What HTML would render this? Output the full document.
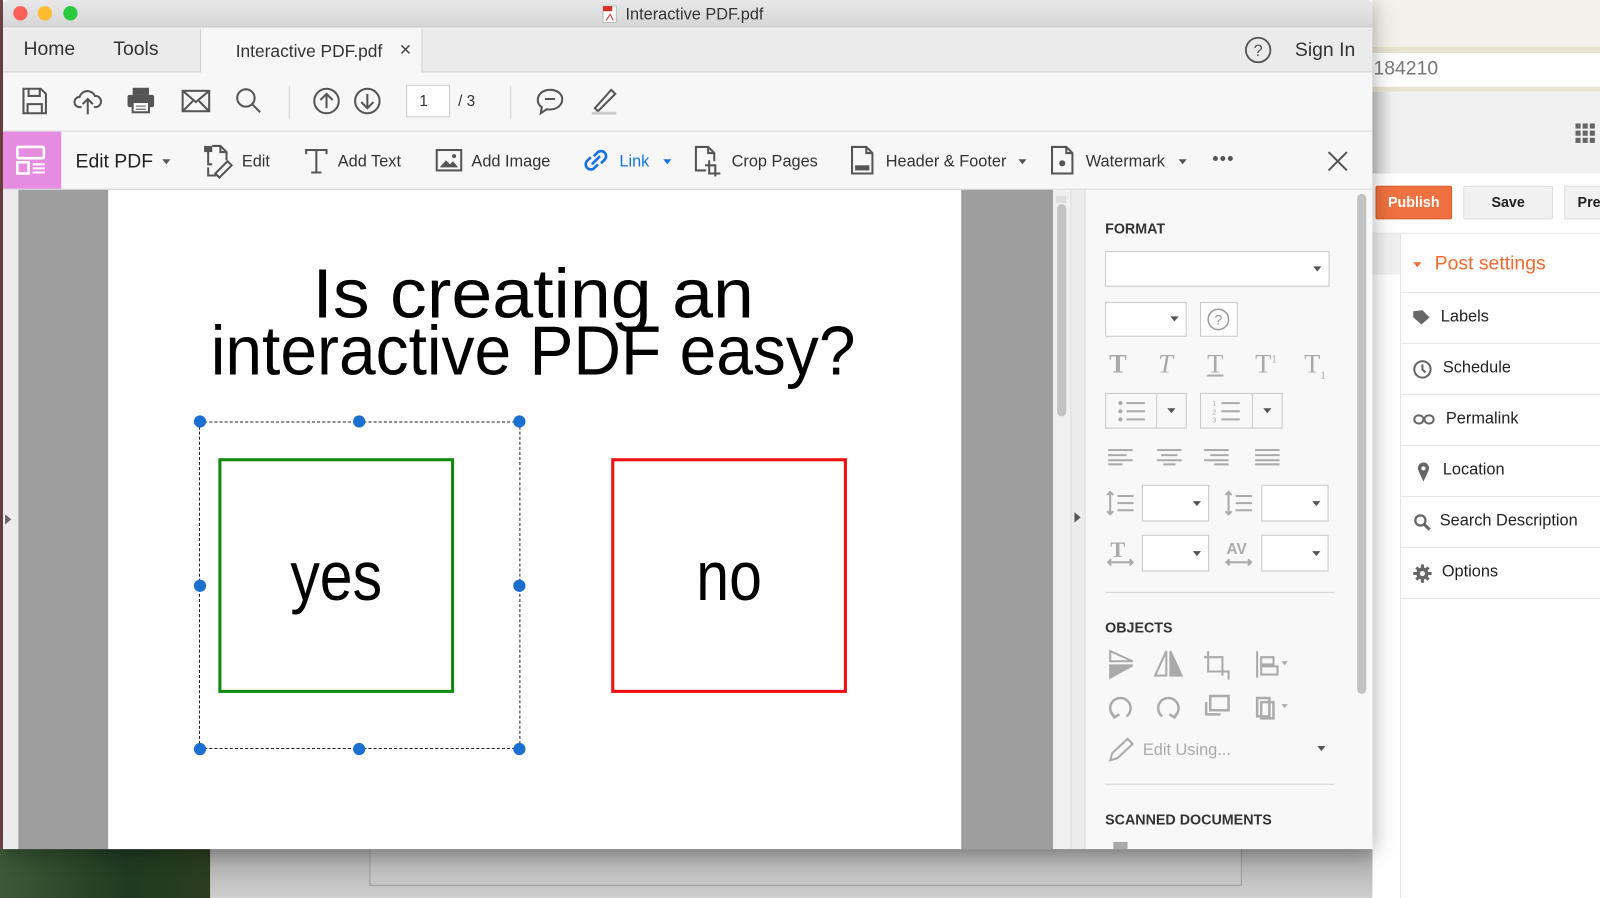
<!DOCTYPE html>
<html><head><meta charset="utf-8"><style>
*{box-sizing:border-box;margin:0;padding:0}
html,body{width:1600px;height:898px;overflow:hidden;background:#c8c8c8;font-family:"Liberation Sans",sans-serif}
#w{position:absolute;left:0;top:0;width:1568px;height:880px;transform:scale(1.0204,1.0205);transform-origin:0 0;overflow:hidden;background:#c6c6c6}
.a{position:absolute}
.t{position:absolute;white-space:nowrap;color:#333}
svg{position:absolute;overflow:visible}
.ic{stroke:#555;fill:none;stroke-width:2}
.sel{position:absolute;border:1px solid #c8c8c8;background:#fff}
.dd{position:absolute;width:0;height:0;border-left:4px solid transparent;border-right:4px solid transparent;border-top:5px solid #555}
</style></head><body><div id="w">
<!-- desktop bottom -->
<div class="a" style="left:0;top:820px;width:206px;height:60px;background:linear-gradient(90deg,#3c5a36,#1f3a22 60%,#2b3d1f)"></div>
<div class="a" style="left:206px;top:832px;width:1362px;height:48px;background:linear-gradient(#a8a8a8,#cfcfcf)"></div>
<div class="a" style="left:362px;top:832px;width:855px;height:36px;border:1px solid #999;border-top:none;background:linear-gradient(#b0b0b0,#c8c8c8)"></div>
<div class="a" style="left:0;top:0;width:3px;height:832px;background:#7a4a4a"></div>
<!-- browser right -->
<div class="a" style="left:1345px;top:0;width:223px;height:880px;background:#fff"></div>
<div class="a" style="left:1345px;top:0;width:223px;height:46px;background:#f4f1e8"></div>
<div class="a" style="left:1345px;top:46px;width:223px;height:6px;background:#e8e2d0"></div>
<div class="a" style="left:1345px;top:52px;width:223px;height:33px;background:#fff"></div>
<div class="t" style="left:1346px;top:57px;font-size:19px;color:#777">184210</div>
<div class="a" style="left:1345px;top:85px;width:223px;height:5px;background:#e8e2d0"></div>
<div class="a" style="left:1345px;top:90px;width:223px;height:80px;background:linear-gradient(90deg,#ccc,#f1f1f1 20px)"></div>
<svg style="left:1544px;top:121px" width="20" height="20"><g fill="#666"><rect x="0" y="0" width="5" height="5"/><rect x="7" y="0" width="5" height="5"/><rect x="14" y="0" width="5" height="5"/><rect x="0" y="7" width="5" height="5"/><rect x="7" y="7" width="5" height="5"/><rect x="14" y="7" width="5" height="5"/><rect x="0" y="14" width="5" height="5"/><rect x="7" y="14" width="5" height="5"/><rect x="14" y="14" width="5" height="5"/></g></svg>
<div class="a" style="left:1348px;top:182px;width:75px;height:33px;background:#f07140;border:1px solid #d95d2c;border-radius:2px;color:#fff;font-weight:bold;font-size:14px;text-align:center;line-height:31px">Publish</div>
<div class="a" style="left:1434px;top:182px;width:88px;height:33px;background:#f1f1f1;border:1px solid #ddd;border-radius:2px;color:#222;font-weight:bold;font-size:14px;text-align:center;line-height:31px">Save</div>
<div class="a" style="left:1533px;top:182px;width:40px;height:33px;background:#f1f1f1;border:1px solid #ddd;color:#222;font-weight:bold;font-size:14px;line-height:31px;padding-left:12px">Pre</div>
<div class="a" style="left:1345px;top:228px;width:223px;height:1px;background:#e5e5e5"></div>
<div class="a" style="left:1372px;top:229px;width:1px;height:651px;background:#e5e5e5"></div>
<div class="a" style="left:1345px;top:229px;width:27px;height:40px;background:#f1f1f1"></div>
<div class="dd" style="left:1385px;top:257px;border-top-color:#f26b2f"></div>
<div class="t" style="left:1406px;top:248px;font-size:19px;color:#f26b2f">Post settings</div>
<div class="a" style="left:1373px;top:286px;width:195px;height:1px;background:#e5e5e5"></div>
<div class="a" style="left:1373px;top:336px;width:195px;height:1px;background:#e5e5e5"></div>
<div class="a" style="left:1373px;top:386px;width:195px;height:1px;background:#e5e5e5"></div>
<div class="a" style="left:1373px;top:436px;width:195px;height:1px;background:#e5e5e5"></div>
<div class="a" style="left:1373px;top:486px;width:195px;height:1px;background:#e5e5e5"></div>
<div class="a" style="left:1373px;top:536px;width:195px;height:1px;background:#e5e5e5"></div>
<div class="a" style="left:1373px;top:586px;width:195px;height:1px;background:#e5e5e5"></div>
<svg style="left:1385px;top:303px" width="18" height="16"><path d="M0 2 L0 8 L8 15 L16 8 L9 1 Z" fill="#666"/></svg>
<div class="t" style="left:1412px;top:302px;font-size:16px;color:#222">Labels</div>
<svg style="left:1385px;top:353px" width="18" height="18"><circle cx="9" cy="9" r="8" stroke="#666" stroke-width="2" fill="none"/><path d="M9 4v5l3 3" stroke="#666" stroke-width="2" fill="none"/></svg>
<div class="t" style="left:1414px;top:352px;font-size:16px;color:#222">Schedule</div>
<svg style="left:1385px;top:406px" width="22" height="10"><rect x="1" y="1" width="9" height="8" rx="4" stroke="#666" stroke-width="2" fill="none"/><rect x="11" y="1" width="9" height="8" rx="4" stroke="#666" stroke-width="2" fill="none"/></svg>
<div class="t" style="left:1417px;top:402px;font-size:16px;color:#222">Permalink</div>
<svg style="left:1389px;top:453px" width="12" height="19"><path d="M6 19 L1 8 A5.5 5.5 0 1 1 11 8 Z" fill="#666"/><circle cx="6" cy="6" r="2" fill="#fff"/></svg>
<div class="t" style="left:1414px;top:452px;font-size:16px;color:#222">Location</div>
<svg style="left:1385px;top:503px" width="18" height="18"><circle cx="7" cy="7" r="5" stroke="#666" stroke-width="2.2" fill="none"/><path d="M11 11l5 5" stroke="#666" stroke-width="3"/></svg>
<div class="t" style="left:1411px;top:502px;font-size:16px;color:#222">Search Description</div>
<svg style="left:1385px;top:553px" width="18" height="18"><circle cx="9" cy="9" r="6" fill="#666"/><g stroke="#666" stroke-width="3"><path d="M9 0v18M0 9h18M3 3l12 12M15 3L3 15"/></g><circle cx="9" cy="9" r="2.5" fill="#fff"/></svg>
<div class="t" style="left:1413px;top:552px;font-size:16px;color:#222">Options</div>

<!-- window -->
<div class="a" style="left:3px;top:0;width:1342px;height:832px;background:#f7f7f7;box-shadow:0 4px 20px rgba(0,0,0,.35)"></div>
<div class="a" style="left:3px;top:0;width:1342px;height:27px;background:linear-gradient(#e8e8e8,#d6d6d6);border-bottom:1px solid #c2c2c2;border-radius:5px 5px 0 0"></div>
<div class="a" style="left:13px;top:6px;width:14px;height:14px;border-radius:50%;background:#fc5f57"></div>
<div class="a" style="left:37px;top:6px;width:14px;height:14px;border-radius:50%;background:#fdbc2e"></div>
<div class="a" style="left:62px;top:6px;width:14px;height:14px;border-radius:50%;background:#2ac840"></div>
<svg style="left:590px;top:5px" width="16" height="18"><rect x="1" y="1" width="13" height="16" fill="#fff" stroke="#bbb"/><rect x="1" y="1" width="9" height="5" fill="#d9302b"/><path d="M4 15 L8 9 L11 15" stroke="#d9302b" fill="none"/></svg>
<div class="t" style="left:613px;top:6px;font-size:16px;color:#333">Interactive PDF.pdf</div>
<div class="a" style="left:3px;top:28px;width:1342px;height:43px;background:#ebebeb;border-bottom:1px solid #d0d0d0"></div>
<div class="a" style="left:196px;top:28px;width:218px;height:43px;background:#f7f7f7;border-left:1px solid #d0d0d0;border-right:1px solid #d0d0d0"></div>
<div class="t" style="left:23px;top:38px;font-size:19px;color:#333">Home</div>
<div class="t" style="left:111px;top:38px;font-size:19px;color:#333">Tools</div>
<div class="t" style="left:231px;top:41px;font-size:17px;color:#333">Interactive PDF.pdf</div>
<div class="t" style="left:391px;top:40px;font-size:15px;color:#444">✕</div>
<svg style="left:1220px;top:36px" width="26" height="26"><circle cx="13" cy="13" r="12" stroke="#555" stroke-width="1.8" fill="none"/><text x="13" y="19" font-size="16" text-anchor="middle" fill="#555" font-family="Liberation Sans">?</text></svg>
<div class="t" style="left:1269px;top:39px;font-size:19px;color:#333">Sign In</div>
<div class="a" style="left:3px;top:128px;width:1342px;height:1px;background:#d8d8d8"></div>
<!-- toolbar icons -->
<svg style="left:22px;top:86px" width="24" height="26"><path d="M1 1h17l5 5v19H1z M6 1v7h11V1 M5 25v-9h14v9" class="ic" stroke="#aaa"/></svg>
<svg style="left:72px;top:85px" width="28" height="28"><path d="M8 20H6a5 5 0 0 1 0-10 8 8 0 0 1 15-1 5.5 5.5 0 0 1 1 11h-2 M14 27V12 M9 17l5-5 5 5" class="ic"/></svg>
<svg style="left:124px;top:85px" width="28" height="26"><rect x="6" y="1" width="16" height="7" fill="#555"/><rect x="1" y="8" width="26" height="12" rx="2" fill="#555"/><rect x="6" y="15" width="16" height="10" fill="#fff" stroke="#555" stroke-width="2"/><path d="M9 19h10M9 22h10" stroke="#555"/></svg>
<svg style="left:178px;top:88px" width="28" height="22"><rect x="1" y="1" width="26" height="20" class="ic"/><path d="M1 1l13 11L27 1M1 21l10-10M27 21L17 11" class="ic"/></svg>
<svg style="left:231px;top:86px" width="26" height="26"><circle cx="10" cy="10" r="8.5" class="ic"/><path d="M16 16l8 8" class="ic" stroke-width="2.5"/></svg>
<div class="a" style="left:283px;top:84px;width:1px;height:32px;background:#d0d0d0"></div>
<svg style="left:307px;top:86px" width="26" height="26"><circle cx="13" cy="13" r="12" class="ic" stroke="#aaa"/><path d="M13 20V6M7 12l6-6 6 6" class="ic" stroke="#aaa"/></svg>
<svg style="left:347px;top:86px" width="26" height="26"><circle cx="13" cy="13" r="12" class="ic"/><path d="M13 6v14M7 14l6 6 6-6" class="ic"/></svg>
<div class="a" style="left:398px;top:83px;width:43px;height:32px;background:#fff;border:1px solid #ccc"></div>
<div class="t" style="left:411px;top:91px;font-size:15px">1</div>
<div class="t" style="left:449px;top:91px;font-size:15px">/ 3</div>
<div class="a" style="left:500px;top:84px;width:1px;height:32px;background:#d0d0d0"></div>
<svg style="left:525px;top:86px" width="28" height="28"><path d="M14 2C7 2 2 6.5 2 12c0 3 1.5 5.5 4 7l-1 6 6-4c1 .2 2 .3 3 .3 7 0 12-4.5 12-10S21 2 14 2z" class="ic"/><path d="M9 11h10" class="ic"/></svg>
<svg style="left:577px;top:84px" width="30" height="30"><path d="M6 22L22 4l4 4L9 25z M4 27h22" class="ic"/><path d="M3 27h24" stroke="#ccc" stroke-width="3"/></svg>
<!-- edit toolbar -->
<div class="a" style="left:3px;top:129px;width:57px;height:56px;background:#e68ce0"></div>
<svg style="left:16px;top:143px" width="30" height="30"><rect x="1" y="1" width="26" height="11" rx="1" stroke="#fff" stroke-width="2.5" fill="none"/><rect x="1" y="16" width="11" height="11" stroke="#fff" stroke-width="2.5" fill="none"/><path d="M16 18h12M16 22h12M16 26h12" stroke="#fff" stroke-width="2"/></svg>
<div class="t" style="left:74px;top:148px;font-size:19px;color:#222">Edit PDF</div>
<div class="dd" style="left:159px;top:156px"></div>
<svg style="left:199px;top:142px" width="30" height="32"><path d="M1 1h8v6H1z" fill="#555"/><path d="M5 7v12h4 M9 1h8l6 6v8 M17 1v6h6 M5 22v8h8" class="ic"/><path d="M12 28l12-12 4 4-12 12z" class="ic"/></svg>
<div class="t" style="left:237px;top:150px;font-size:16px;color:#333">Edit</div>
<svg style="left:299px;top:146px" width="22" height="24"><path d="M1 5V1h20v4M11 1v22M6 23h10" class="ic"/></svg>
<div class="t" style="left:331px;top:150px;font-size:16px;color:#333">Add Text</div>
<svg style="left:427px;top:146px" width="26" height="22"><rect x="1" y="1" width="24" height="20" class="ic"/><path d="M4 18l6-7 4 4 3-3 5 6z" fill="#555"/><circle cx="18" cy="7" r="2" fill="#555"/></svg>
<div class="t" style="left:462px;top:150px;font-size:16px;color:#333">Add Image</div>
<svg style="left:570px;top:143px" width="28" height="28"><path d="M12 10l4-4a5 5 0 0 1 7 7l-4 4M16 18l-4 4a5 5 0 0 1-7-7l4-4M10 18l8-8" stroke="#1473e6" stroke-width="2.6" fill="none"/></svg>
<div class="t" style="left:607px;top:150px;font-size:16px;color:#1473e6">Link</div>
<div class="dd" style="left:650px;top:156px;border-top-color:#1473e6"></div>
<svg style="left:681px;top:143px" width="26" height="30"><path d="M11 24H1V1h12l6 6v8 M13 1v6h6 M14 14v13h11 M10 19h10v11" class="ic"/></svg>
<div class="t" style="left:717px;top:150px;font-size:16px;color:#333">Crop Pages</div>
<svg style="left:834px;top:143px" width="22" height="28"><path d="M1 1h14l6 6v20H1z M15 1v6h6" class="ic"/><rect x="4" y="19" width="14" height="5" fill="#555"/></svg>
<div class="t" style="left:868px;top:150px;font-size:16px;color:#333">Header &amp; Footer</div>
<div class="dd" style="left:998px;top:156px"></div>
<svg style="left:1030px;top:143px" width="22" height="28"><path d="M1 1h14l6 6v20H1z M15 1v6h6" class="ic"/><circle cx="11" cy="17" r="3" fill="#555"/></svg>
<div class="t" style="left:1064px;top:150px;font-size:16px;color:#333">Watermark</div>
<div class="dd" style="left:1155px;top:156px"></div>
<div class="t" style="left:1188px;top:145px;font-size:18px;color:#555;letter-spacing:1px">•••</div>
<svg style="left:1301px;top:148px" width="20" height="20"><path d="M1 1l18 18M19 1L1 19" stroke="#555" stroke-width="2"/></svg>
<div class="a" style="left:3px;top:185px;width:1342px;height:1px;background:#d8d8d8"></div>
<!-- content -->
<div class="a" style="left:3px;top:186px;width:15px;height:646px;background:#ececec"></div>
<div class="dd" style="left:5px;top:504px;border-top:5px solid transparent;border-bottom:5px solid transparent;border-left:6px solid #666;border-right:none"></div>
<div class="a" style="left:18px;top:186px;width:1014px;height:646px;background:#9e9e9e"></div>
<div class="a" style="left:106px;top:186px;width:836px;height:646px;background:#fff"></div>
<div class="a" style="left:1032px;top:186px;width:17px;height:646px;background:#f0f0f0"></div>
<div class="a" style="left:1035px;top:192px;width:10px;height:7px;background:#ddd"></div>
<div class="a" style="left:1036px;top:200px;width:9px;height:208px;border-radius:5px;background:#c2c2c2"></div>
<div class="a" style="left:1049px;top:186px;width:15px;height:646px;background:#ececec;border-left:1px solid #ddd;border-right:1px solid #ddd"></div>
<div class="dd" style="left:1053px;top:502px;border-top:5px solid transparent;border-bottom:5px solid transparent;border-left:6px solid #555;border-right:none"></div>
<!-- pdf page -->
<div class="t" style="left:0;width:1045px;text-align:center;top:249px;font-size:68px;color:#000;transform:scaleX(1.06);transform-origin:522px 0">Is creating an</div>
<div class="t" style="left:0;width:1045px;text-align:center;top:305px;font-size:68px;color:#000;transform:scaleX(.95);transform-origin:522px 0">interactive PDF easy?</div>
<div class="a" style="left:195px;top:413px;width:315px;height:321px;border:1.5px dashed #222"></div>
<div class="a" style="left:214px;top:449px;width:231px;height:230px;border:3px solid #108a10"></div>
<div class="a" style="left:599px;top:449px;width:231px;height:230px;border:3px solid #f01010"></div>
<div class="t" style="left:214px;width:231px;text-align:center;top:526px;font-size:68px;color:#000;transform:scaleX(.85)">yes</div>
<div class="t" style="left:599px;width:231px;text-align:center;top:526px;font-size:68px;color:#000;transform:scaleX(.85)">no</div>
<svg style="left:0;top:0" width="600" height="800"><g fill="#1b6fd0"><circle cx="196" cy="413" r="6"/><circle cx="352" cy="413" r="6"/><circle cx="509" cy="413" r="6"/><circle cx="196" cy="574" r="6"/><circle cx="509" cy="574" r="6"/><circle cx="196" cy="734" r="6"/><circle cx="352" cy="734" r="6"/><circle cx="509" cy="734" r="6"/></g></svg>
<!-- right panel -->
<div class="a" style="left:1064px;top:186px;width:281px;height:646px;background:#f8f8f8"></div>
<div class="a" style="left:1330px;top:190px;width:9px;height:490px;border-radius:5px;background:#c2c2c2"></div>
<div class="t" style="left:1083px;top:216px;font-size:14px;font-weight:bold;color:#333">FORMAT</div>
<div class="sel" style="left:1083px;top:246px;width:220px;height:35px"></div><div class="dd" style="left:1287px;top:261px"></div>
<div class="sel" style="left:1083px;top:296px;width:80px;height:34px"></div><div class="dd" style="left:1147px;top:310px"></div>
<div class="sel" style="left:1176px;top:296px;width:37px;height:34px"></div>
<svg style="left:1182px;top:301px" width="24" height="24"><circle cx="12" cy="12" r="10" stroke="#999" stroke-width="1.5" fill="none"/><text x="12" y="17" font-size="14" text-anchor="middle" fill="#999" font-family="Liberation Sans">?</text></svg>
<div class="t" style="left:1087px;top:342px;font-family:'Liberation Serif',serif;font-size:26px;color:#aaa;font-weight:bold">T</div>
<div class="t" style="left:1135px;top:342px;font-family:'Liberation Serif',serif;font-size:26px;color:#aaa;font-style:italic">T</div>
<div class="t" style="left:1183px;top:342px;font-family:'Liberation Serif',serif;font-size:26px;color:#aaa;text-decoration:underline">T</div>
<div class="t" style="left:1230px;top:342px;font-family:'Liberation Serif',serif;font-size:26px;color:#aaa">T<sup style="font-size:11px">1</sup></div>
<div class="t" style="left:1278px;top:342px;font-family:'Liberation Serif',serif;font-size:26px;color:#aaa">T<sub style="font-size:11px">1</sub></div>
<div class="sel" style="left:1083px;top:385px;width:80px;height:35px;background:#f8f8f8"></div><div class="a" style="left:1133px;top:385px;width:1px;height:35px;background:#ccc"></div><div class="dd" style="left:1144px;top:400px"></div>
<svg style="left:1095px;top:392px" width="28" height="22"><g fill="#aaa"><circle cx="3" cy="3" r="2"/><circle cx="3" cy="11" r="2"/><circle cx="3" cy="19" r="2"/><rect x="9" y="2" width="18" height="2"/><rect x="9" y="10" width="18" height="2"/><rect x="9" y="18" width="18" height="2"/></g></svg>
<div class="sel" style="left:1176px;top:385px;width:81px;height:35px;background:#f8f8f8"></div><div class="a" style="left:1227px;top:385px;width:1px;height:35px;background:#ccc"></div><div class="dd" style="left:1238px;top:400px"></div>
<svg style="left:1188px;top:392px" width="28" height="22"><g fill="#aaa" font-size="7" font-family="Liberation Sans"><text x="0" y="6">1</text><text x="0" y="14">2</text><text x="0" y="22">3</text><rect x="9" y="2" width="18" height="2"/><rect x="9" y="10" width="18" height="2"/><rect x="9" y="18" width="18" height="2"/></g></svg>
<svg style="left:1086px;top:440px" width="220" height="16"><g fill="#aaa"><rect x="0" y="0" width="24" height="2"/><rect x="0" y="5" width="18" height="2"/><rect x="0" y="10" width="24" height="2"/><rect x="0" y="14" width="14" height="2"/><rect x="48" y="0" width="24" height="2"/><rect x="52" y="5" width="16" height="2"/><rect x="48" y="10" width="24" height="2"/><rect x="54" y="14" width="12" height="2"/><rect x="94" y="0" width="24" height="2"/><rect x="100" y="5" width="18" height="2"/><rect x="94" y="10" width="24" height="2"/><rect x="104" y="14" width="14" height="2"/><rect x="144" y="0" width="24" height="2"/><rect x="144" y="5" width="24" height="2"/><rect x="144" y="10" width="24" height="2"/><rect x="144" y="14" width="24" height="2"/></g></svg>
<svg style="left:1084px;top:480px" width="28" height="26"><path d="M4 2v22M1 5l3-3 3 3M1 21l3 3 3-3" stroke="#aaa" stroke-width="2" fill="none"/><path d="M11 6h16M11 13h16M11 20h16" stroke="#aaa" stroke-width="2"/></svg>
<div class="sel" style="left:1119px;top:475px;width:66px;height:36px"></div><div class="dd" style="left:1169px;top:491px"></div>
<svg style="left:1200px;top:480px" width="28" height="26"><path d="M4 2v22M1 5l3-3 3 3M1 21l3 3 3-3" stroke="#aaa" stroke-width="2" fill="none"/><path d="M11 6h16M11 13h16M11 20h16" stroke="#aaa" stroke-width="2"/></svg>
<div class="sel" style="left:1236px;top:475px;width:66px;height:36px"></div><div class="dd" style="left:1286px;top:491px"></div>
<div class="t" style="left:1088px;top:526px;font-family:'Liberation Serif',serif;font-size:22px;color:#aaa;font-weight:bold">T</div>
<svg style="left:1084px;top:546px" width="28" height="10"><path d="M2 5h24M5 2L2 5l3 3M23 2l3 3-3 3" stroke="#aaa" stroke-width="2" fill="none"/></svg>
<div class="sel" style="left:1119px;top:524px;width:66px;height:36px"></div><div class="dd" style="left:1169px;top:540px"></div>
<div class="t" style="left:1202px;top:530px;font-size:15px;font-weight:bold;color:#aaa">AV</div>
<svg style="left:1200px;top:546px" width="28" height="10"><path d="M2 5h24M5 2L2 5l3 3M23 2l3 3-3 3" stroke="#aaa" stroke-width="2" fill="none"/></svg>
<div class="sel" style="left:1236px;top:524px;width:66px;height:36px"></div><div class="dd" style="left:1286px;top:540px"></div>
<div class="a" style="left:1083px;top:580px;width:225px;height:1px;background:#d5d5d5"></div>
<div class="t" style="left:1083px;top:607px;font-size:14px;font-weight:bold;color:#333">OBJECTS</div>
<svg style="left:1086px;top:636px" width="180" height="30"><g fill="none" stroke="#aaa" stroke-width="2"><path d="M2 2l22 10H2z"/><path d="M2 16h22L2 28z" fill="#aaa"/><path d="M57 2v24H46z"/><path d="M61 2v24h11z" fill="#aaa"/><path d="M98 2v20h20v8M94 8h18v18"/><path d="M146 2v26M150 8h12v7h-12zM150 17h16v8h-16z"/></g><path d="M170 12l3 4 3-4z" fill="#aaa"/></svg>
<svg style="left:1086px;top:678px" width="180" height="30"><g fill="none" stroke="#aaa" stroke-width="2.4"><path d="M6 24A10 10 0 1 1 18 24"/><path d="M3 20l3 5 5-3"/><path d="M53 24A10 10 0 1 1 65 24"/><path d="M68 20l-3 5-5-3"/><path d="M100 4h18v14h-18z M96 10v12h14"/><path d="M146 6h12v18h-12zM150 10h12v16h-12z"/></g><path d="M170 12l3 4 3-4z" fill="#aaa"/></svg>
<svg style="left:1085px;top:722px" width="28" height="26"><path d="M3 23l2-7 15-14 5 5-15 14z" fill="none" stroke="#aaa" stroke-width="2"/></svg>
<div class="t" style="left:1120px;top:727px;font-size:16px;color:#aaa">Edit Using...</div>
<div class="dd" style="left:1291px;top:731px"></div>
<div class="a" style="left:1083px;top:768px;width:225px;height:1px;background:#d5d5d5"></div>
<div class="t" style="left:1083px;top:795px;font-size:14px;font-weight:bold;color:#333">SCANNED DOCUMENTS</div>
<div class="a" style="left:1091px;top:825px;width:14px;height:7px;background:#aaa"></div>
</div></body></html>
